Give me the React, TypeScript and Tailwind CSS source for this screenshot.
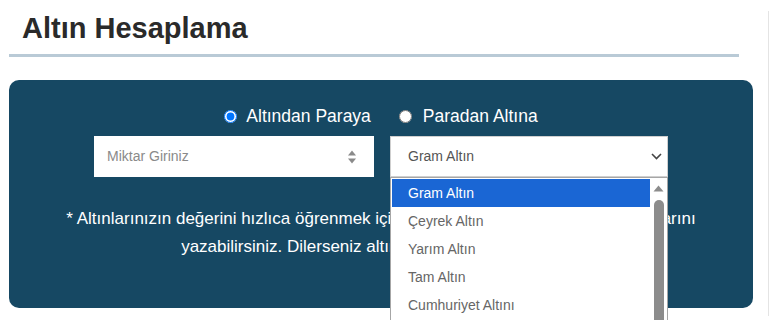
const options = ['Gram Altın', 'Çeyrek Altın', 'Yarım Altın', 'Tam Altın', 'Cumhuriyet Altını', 'Ata Altın'];

const SpinnerIcon = () => (
    <svg width="10" height="16" viewBox="0 0 10 16" className="shrink-0">
        <path d="M1 6.5 L5 1.5 L9 6.5 Z" fill="#8a8a8a" />
        <path d="M1 9.5 L5 14.5 L9 9.5 Z" fill="#8a8a8a" />
    </svg>
);

const ChevronIcon = () => (
    <svg width="11" height="7" viewBox="0 0 11 7" className="shrink-0">
        <path d="M1 1 L5.5 5.5 L10 1" fill="none" stroke="#444" strokeWidth="1.6" />
    </svg>
);

export default function App() {
    return (
        <div className="h-[320px] w-[770px] overflow-hidden bg-white font-['Liberation_Sans',Arial,sans-serif]">
            <div className="mt-[15px] h-[305px] w-[769px] border-r border-[#e4e4e4] pl-[9px]">
                {/* Title */}
                <h1 className="-mt-[4px] pl-[13px] text-[29px] leading-[34px] font-bold text-[#2a2a2a]">Altın Hesaplama</h1>
                <div className="mt-[9px] h-[3px] w-[730px] bg-[#b9cad6]" />

                {/* Calculator panel */}
                <section className="mt-[23px] h-[228px] w-[744px] rounded-[10px] bg-[#164863] pt-[26px] text-white">
                    <div className="flex h-[20px] items-center justify-center gap-[28px] text-[17.5px]">
                        <label className="flex items-center gap-[9px]">
                            <input type="radio" name="mode" defaultChecked className="m-0 h-[13px] w-[13px]" />
                            <span>Altından Paraya</span>
                        </label>
                        <label className="flex items-center gap-[11px]">
                            <input type="radio" name="mode" className="m-0 h-[13px] w-[13px]" />
                            <span>Paradan Altına</span>
                        </label>
                    </div>

                    <div className="mt-[10px] flex justify-center gap-[16px]">
                        <div className="flex h-[41px] w-[280px] items-center bg-white pr-[17px] pl-[13px]">
                            <input
                                type="text"
                                placeholder="Miktar Giriniz"
                                className="w-full bg-transparent text-[14px] text-[#555] outline-none placeholder:text-[#8a8a8a]"
                            />
                            <SpinnerIcon />
                        </div>

                        <div className="relative">
                            <div className="flex h-[41px] w-[278px] items-center justify-between border border-[#cfcfcf] bg-white pr-[5px] pl-[17px] text-[14px] text-[#555]">
                                <span>Gram Altın</span>
                                <ChevronIcon />
                            </div>

                            {/* Open dropdown list */}
                            <div className="absolute top-[41px] left-0 z-10 flex h-[170px] w-[278px] border border-[#a6a6a6] bg-white pt-[1px] pl-[1px]">
                                <ul className="flex-1 text-[14px] text-[#666]">
                                    {options.map((opt, i) => (
                                        <li
                                            key={opt}
                                            className={
                                                i === 0
                                                    ? 'flex h-[28px] items-center bg-[#1a66d4] pl-[16px] text-white'
                                                    : 'flex h-[28px] items-center pl-[16px]'
                                            }
                                        >
                                            {opt}
                                        </li>
                                    ))}
                                </ul>
                                <div className="flex w-[17px] flex-col items-center pt-[6px]">
                                    <svg width="11" height="7" viewBox="0 0 11 7">
                                        <path d="M0.5 6.5 L5.5 0.5 L10.5 6.5 Z" fill="#8c8c8c" />
                                    </svg>
                                    <div className="mt-[8px] w-[10px] flex-1 rounded-t-[5px] bg-[#8c8c8c]" />
                                </div>
                            </div>
                        </div>
                    </div>

                    <p className="mt-[28px] text-center text-[17px] leading-[28px]">
                        * Altınlarınızın değerini hızlıca öğrenmek için aşağıdaki kutucuklara altın miktarlarını
                        <br />
                        yazabilirsiniz. Dilerseniz altın türünü de seçebilirsiniz.
                    </p>
                </section>
            </div>
        </div>
    );
}
